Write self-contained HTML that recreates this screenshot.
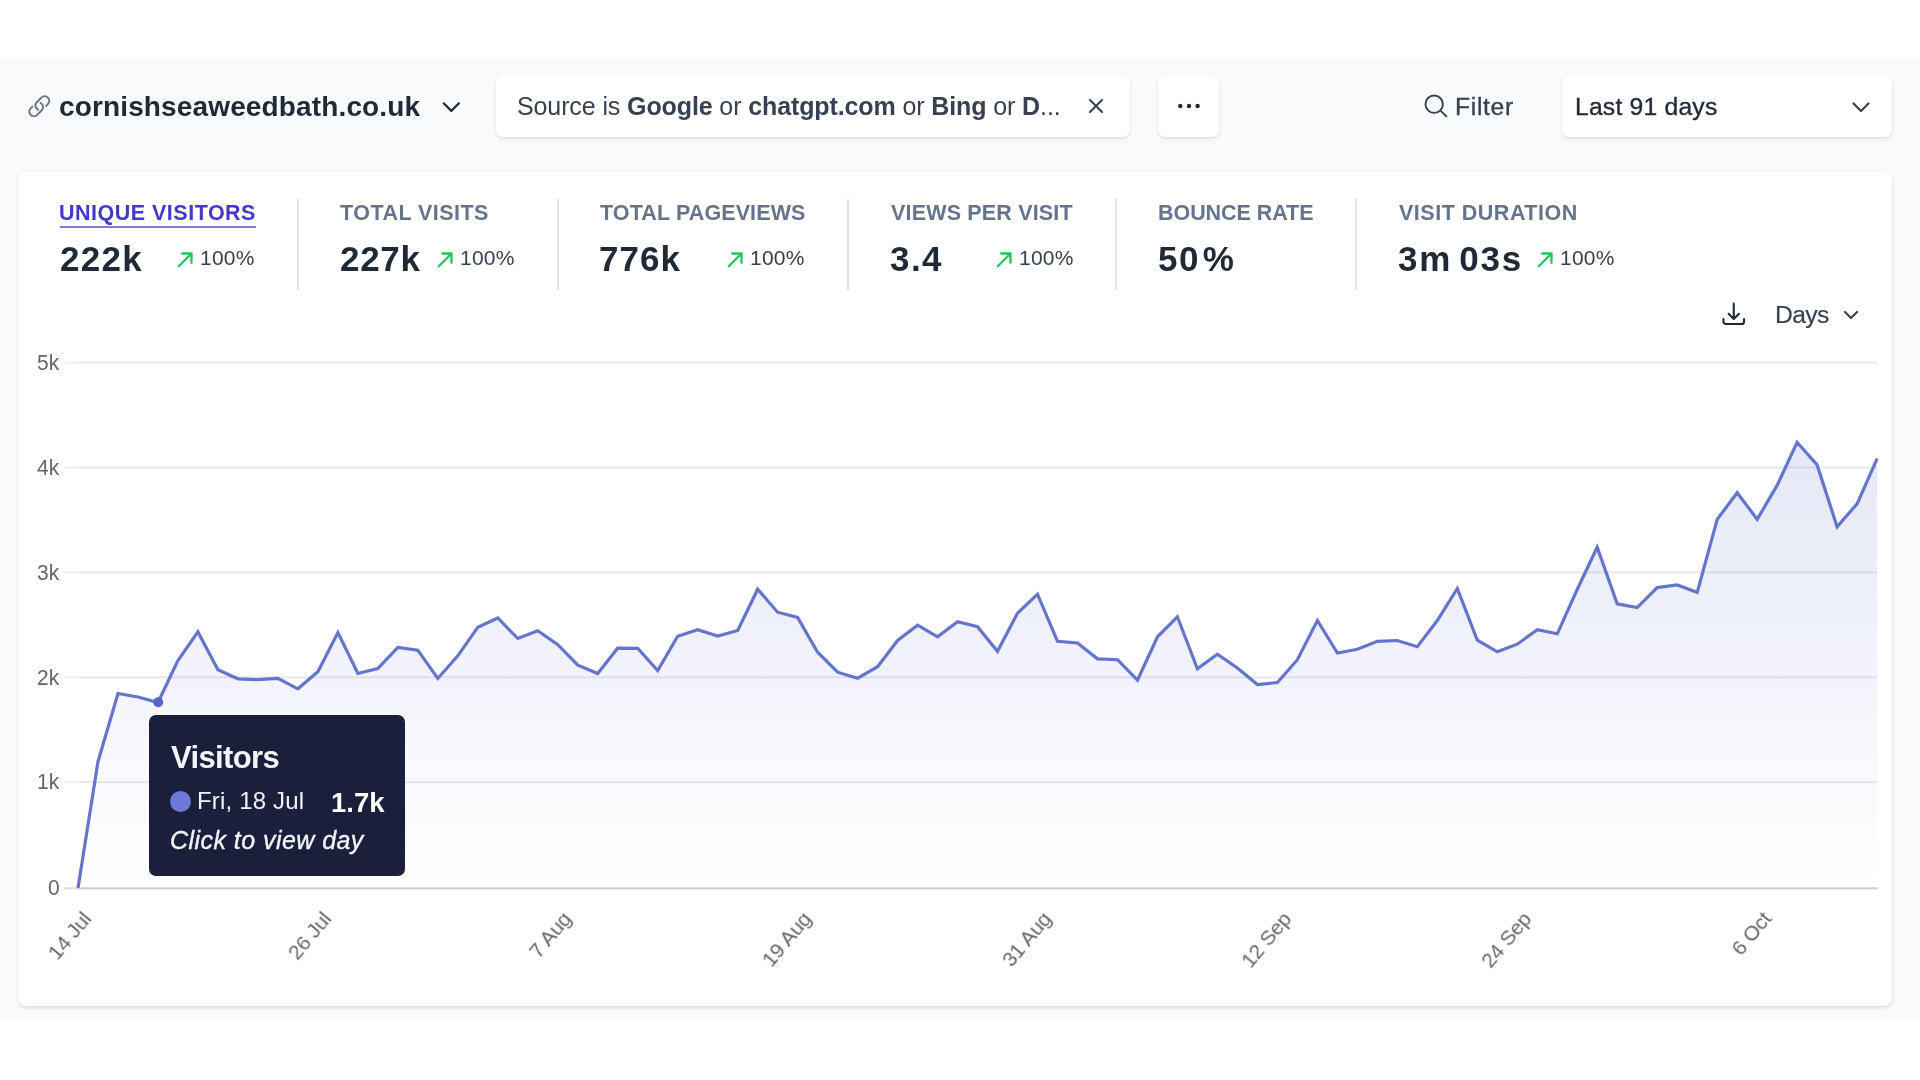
<!DOCTYPE html>
<html><head><meta charset="utf-8"><title>Plausible</title>
<style>
*{box-sizing:border-box;margin:0;padding:0}
html,body{width:1920px;height:1080px;overflow:hidden;background:#fff}
body{font-family:"Liberation Sans",sans-serif;color:#1f2937;position:relative}
.bg{position:absolute;left:0;top:59px;width:1920px;height:960px;background:#f9fafb}
.abs{position:absolute;white-space:nowrap}
.t{line-height:1.2;will-change:transform}
.pill{position:absolute;background:#fff;border-radius:7px;box-shadow:0 2px 5px rgba(0,0,0,.08),0 1px 2px rgba(0,0,0,.06)}
.card{position:absolute;left:18.300px;top:171.500px;width:1873.900px;height:834.100px;background:#fff;border-radius:8px;box-shadow:0 2px 5px rgba(0,0,0,.09),0 1px 2px rgba(0,0,0,.07)}
.div{position:absolute;top:198.500px;width:2px;height:91.500px;background:#e1e2e6}
.xl{position:absolute;width:200px;text-align:right;line-height:24px;color:#666;transform-origin:100% 50%;transform:rotate(-50deg);white-space:nowrap;will-change:transform}
</style></head><body>
<div class="bg"></div>

<!-- header icons -->
<svg class="abs" style="left:26.750px;top:93.850px" width="24.500" height="24.500" viewBox="0 0 24 24" fill="none" stroke="#6b7280" stroke-width="1.9" stroke-linecap="round" stroke-linejoin="round"><path d="M13.19 8.688a4.5 4.5 0 011.242 7.244l-4.5 4.5a4.5 4.5 0 01-6.364-6.364l1.757-1.757m13.35-.622l1.757-1.757a4.5 4.5 0 00-6.364-6.364l-4.5 4.5a4.5 4.5 0 001.242 7.244"/></svg>
<svg class="abs" style="left:441px;top:97px" width="20" height="20" viewBox="0 0 20 20" fill="none" stroke="#1f2937" stroke-width="2.2" stroke-linecap="round" stroke-linejoin="round"><path d="M2.700 6.300l7.600 7.600 7.600-7.600"/></svg>

<div class="pill" style="left:496px;top:75px;width:634px;height:62px"></div>
<svg class="abs" style="left:1085.5px;top:96px" width="20" height="20" viewBox="0 0 20 20" fill="none" stroke="#374151" stroke-width="2" stroke-linecap="round"><path d="M4 4l12 12M16 4L4 16"/></svg>

<div class="pill" style="left:1157.800px;top:75px;width:61.400px;height:61.700px"></div>
<svg class="abs" style="left:1176.500px;top:101.700px" width="24" height="8" viewBox="0 0 24 8" fill="#1f2937"><circle cx="3.300" cy="4" r="2.200"/><circle cx="12" cy="4" r="2.200"/><circle cx="20.600" cy="4" r="2.200"/></svg>

<svg class="abs" style="left:1421.600px;top:91.800px" width="27.800" height="27.800" viewBox="0 0 24 24" fill="none" stroke="#374151" stroke-width="1.650" stroke-linecap="round" stroke-linejoin="round"><path d="M21 21l-5.197-5.197m0 0A7.5 7.5 0 105.196 5.196a7.5 7.5 0 0010.607 10.607z"/></svg>

<div class="pill" style="left:1562px;top:75px;width:330px;height:62px"></div>
<svg class="abs" style="left:1851.400px;top:97px" width="20" height="20" viewBox="0 0 20 20" fill="none" stroke="#374151" stroke-width="2.2" stroke-linecap="round" stroke-linejoin="round"><path d="M2.500 6.500l7.500 7.500 7.500-7.500"/></svg>

<!-- card -->
<div class="card"></div>
<div class="abs" style="left:60px;top:226px;width:196px;height:2px;background:#857bd8"></div>
<div class="div" style="left:297px"></div>
<div class="div" style="left:557px"></div>
<div class="div" style="left:847px"></div>
<div class="div" style="left:1115px"></div>
<div class="div" style="left:1355px"></div>
<svg class="abs" style="left:176.0px;top:250.5px" width="18" height="18" viewBox="0 0 18 18" fill="none" stroke="#22c55e" stroke-width="2.3" stroke-linecap="round" stroke-linejoin="round"><path d="M2.800 15.200L15.500 2.500M6.200 2.500H15.500V11.800"/></svg>
<svg class="abs" style="left:435.5px;top:250.5px" width="18" height="18" viewBox="0 0 18 18" fill="none" stroke="#22c55e" stroke-width="2.3" stroke-linecap="round" stroke-linejoin="round"><path d="M2.800 15.200L15.500 2.500M6.200 2.500H15.500V11.800"/></svg>
<svg class="abs" style="left:726.1px;top:250.5px" width="18" height="18" viewBox="0 0 18 18" fill="none" stroke="#22c55e" stroke-width="2.3" stroke-linecap="round" stroke-linejoin="round"><path d="M2.800 15.200L15.500 2.500M6.200 2.500H15.500V11.800"/></svg>
<svg class="abs" style="left:994.8px;top:250.5px" width="18" height="18" viewBox="0 0 18 18" fill="none" stroke="#22c55e" stroke-width="2.3" stroke-linecap="round" stroke-linejoin="round"><path d="M2.800 15.200L15.500 2.500M6.200 2.500H15.500V11.800"/></svg>
<svg class="abs" style="left:1535.5px;top:250.5px" width="18" height="18" viewBox="0 0 18 18" fill="none" stroke="#22c55e" stroke-width="2.3" stroke-linecap="round" stroke-linejoin="round"><path d="M2.800 15.200L15.500 2.500M6.200 2.500H15.500V11.800"/></svg>


<!-- days -->
<svg class="abs" style="left:1720px;top:299.500px" width="27.500" height="27.500" viewBox="0 0 24 24" fill="none" stroke="#1f2937" stroke-width="1.8" stroke-linecap="round" stroke-linejoin="round"><path d="M3 16.5v2.250A2.250 2.250 0 005.250 21h13.500A2.250 2.250 0 0021 18.750V16.500M16.500 12L12 16.500m0 0L7.500 12m4.500 4.500V3"/></svg>
<svg class="abs" style="left:1842.200px;top:305.500px" width="18" height="18" viewBox="0 0 18 18" fill="none" stroke="#374151" stroke-width="2.2" stroke-linecap="round" stroke-linejoin="round"><path d="M3 6l6 6 6-6"/></svg>

<!-- chart -->
<svg class="abs" style="left:0;top:0" width="1920" height="1080" viewBox="0 0 1920 1080">
<defs><linearGradient id="g" x1="0" y1="362" x2="0" y2="887" gradientUnits="userSpaceOnUse">
<stop offset="0" stop-color="#6574cd" stop-opacity="0.20"/><stop offset="1" stop-color="#6574cd" stop-opacity="0"/></linearGradient></defs>
<rect x="64" y="361.6" width="14" height="2" fill="#f0f0f1"/><rect x="78" y="361.6" width="1799" height="2" fill="#e8e8ea"/>
<rect x="64" y="466.5" width="14" height="2" fill="#f0f0f1"/><rect x="78" y="466.5" width="1799" height="2" fill="#e8e8ea"/>
<rect x="64" y="571.4" width="14" height="2" fill="#f0f0f1"/><rect x="78" y="571.4" width="1799" height="2" fill="#e8e8ea"/>
<rect x="64" y="676.3" width="14" height="2" fill="#f0f0f1"/><rect x="78" y="676.3" width="1799" height="2" fill="#e8e8ea"/>
<rect x="64" y="781.2" width="14" height="2" fill="#f0f0f1"/><rect x="78" y="781.2" width="1799" height="2" fill="#e8e8ea"/>
<rect x="64" y="887.3" width="14" height="2" fill="#dededf"/><rect x="78" y="887.3" width="1800" height="2" fill="#cdcdcf"/>

<path d="M78.0 888.0 L98.0 761.5 L118.0 693.5 L138.0 697.0 L158.0 702.5 L177.9 660.5 L197.9 631.8 L217.9 669.7 L237.9 678.8 L257.9 679.7 L277.9 678.3 L297.9 688.8 L317.9 671.8 L337.9 632.5 L357.9 673.5 L377.8 668.5 L397.8 647.5 L417.8 650.2 L437.8 678.5 L457.8 655.8 L477.8 627.2 L497.8 618.0 L517.8 638.5 L537.8 630.8 L557.8 644.7 L577.8 665.2 L597.7 673.5 L617.7 648.2 L637.7 648.3 L657.7 670.5 L677.7 636.3 L697.7 629.7 L717.7 636.0 L737.7 630.5 L757.7 589.2 L777.6 612.2 L797.6 617.5 L817.6 652.2 L837.6 672.2 L857.6 678.2 L877.6 666.7 L897.6 640.5 L917.6 625.2 L937.6 636.8 L957.6 621.8 L977.5 626.7 L997.5 651.3 L1017.5 613.3 L1037.5 594.2 L1057.5 641.3 L1077.5 643.0 L1097.5 658.8 L1117.5 659.7 L1137.5 680.2 L1157.5 636.8 L1177.4 616.8 L1197.4 668.8 L1217.4 654.2 L1237.4 668.0 L1257.4 684.5 L1277.4 682.5 L1297.4 659.7 L1317.4 620.5 L1337.4 653.0 L1357.4 649.2 L1377.3 641.3 L1397.3 640.5 L1417.3 646.7 L1437.3 620.5 L1457.3 588.5 L1477.3 640.2 L1497.3 651.8 L1517.3 644.2 L1537.3 629.7 L1557.3 633.8 L1577.2 589.5 L1597.2 547.2 L1617.2 603.8 L1637.2 607.6 L1657.2 587.6 L1677.2 584.9 L1697.2 592.3 L1717.2 519.4 L1737.2 492.7 L1757.2 519.4 L1777.1 485.4 L1797.1 442.3 L1817.1 464.9 L1837.1 526.7 L1857.1 503.8 L1877.1 458.7 L1877.1 888.3 L78.0 888.3 Z" fill="url(#g)"/>
<path d="M78.0 888.0 L98.0 761.5 L118.0 693.5 L138.0 697.0 L158.0 702.5 L177.9 660.5 L197.9 631.8 L217.9 669.7 L237.9 678.8 L257.9 679.7 L277.9 678.3 L297.9 688.8 L317.9 671.8 L337.9 632.5 L357.9 673.5 L377.8 668.5 L397.8 647.5 L417.8 650.2 L437.8 678.5 L457.8 655.8 L477.8 627.2 L497.8 618.0 L517.8 638.5 L537.8 630.8 L557.8 644.7 L577.8 665.2 L597.7 673.5 L617.7 648.2 L637.7 648.3 L657.7 670.5 L677.7 636.3 L697.7 629.7 L717.7 636.0 L737.7 630.5 L757.7 589.2 L777.6 612.2 L797.6 617.5 L817.6 652.2 L837.6 672.2 L857.6 678.2 L877.6 666.7 L897.6 640.5 L917.6 625.2 L937.6 636.8 L957.6 621.8 L977.5 626.7 L997.5 651.3 L1017.5 613.3 L1037.5 594.2 L1057.5 641.3 L1077.5 643.0 L1097.5 658.8 L1117.5 659.7 L1137.5 680.2 L1157.5 636.8 L1177.4 616.8 L1197.4 668.8 L1217.4 654.2 L1237.4 668.0 L1257.4 684.5 L1277.4 682.5 L1297.4 659.7 L1317.4 620.5 L1337.4 653.0 L1357.4 649.2 L1377.3 641.3 L1397.3 640.5 L1417.3 646.7 L1437.3 620.5 L1457.3 588.5 L1477.3 640.2 L1497.3 651.8 L1517.3 644.2 L1537.3 629.7 L1557.3 633.8 L1577.2 589.5 L1597.2 547.2 L1617.2 603.8 L1637.2 607.6 L1657.2 587.6 L1677.2 584.9 L1697.2 592.3 L1717.2 519.4 L1737.2 492.7 L1757.2 519.4 L1777.1 485.4 L1797.1 442.3 L1817.1 464.9 L1837.1 526.7 L1857.1 503.8 L1877.1 458.7" fill="none" stroke="#6574cd" stroke-width="3.2" stroke-linejoin="miter" stroke-linecap="butt"/>
<circle cx="158.2" cy="702.2" r="5" fill="#5663c9"/>
</svg>
<div class="xl" style="left:-112.6px;top:902.9px;font-size:21px;letter-spacing:-0.3px">14 Jul</div>
<div class="xl" style="left:127.4px;top:902.9px;font-size:21px;letter-spacing:-0.3px">26 Jul</div>
<div class="xl" style="left:367.4px;top:902.9px;font-size:21px;letter-spacing:-0.3px">7 Aug</div>
<div class="xl" style="left:607.4px;top:902.9px;font-size:21px;letter-spacing:-0.3px">19 Aug</div>
<div class="xl" style="left:847.4px;top:902.9px;font-size:21px;letter-spacing:-0.3px">31 Aug</div>
<div class="xl" style="left:1087.4px;top:902.9px;font-size:21px;letter-spacing:-0.3px">12 Sep</div>
<div class="xl" style="left:1327.4px;top:902.9px;font-size:21px;letter-spacing:-0.3px">24 Sep</div>
<div class="xl" style="left:1567.4px;top:902.9px;font-size:21px;letter-spacing:-0.3px">6 Oct</div>


<!-- tooltip -->
<div class="abs" style="left:149px;top:715.200px;width:256px;height:160.800px;background:#1a1f3b;border-radius:7px"></div>
<div class="abs" style="left:170px;top:791.200px;width:21px;height:21px;border-radius:50%;background:#6b7ad9"></div>
<div class="abs t" id="domain" style="left:59.00px;top:89.50px;font-size:28px;letter-spacing:0.139px;font-weight:bold;color:#1f2937">cornishseaweedbath.co.uk</div>
<div class="abs t" id="filt" style="left:517.00px;top:91.31px;font-size:25px;letter-spacing:-0.110px;color:#374151">Source is <b>Google</b> or <b>chatgpt.com</b> or <b>Bing</b> or <b>D</b>...</div>
<div class="abs t" id="filter" style="left:1455.00px;top:91.71px;font-size:24.7px;letter-spacing:0.660px;color:#374151;-webkit-text-stroke:0.35px #374151">Filter</div>
<div class="abs t" id="last" style="left:1575.00px;top:91.71px;font-size:24.7px;letter-spacing:0.204px;color:#1f2937;-webkit-text-stroke:0.35px #1f2937">Last 91 days</div>
<div class="abs t" id="l1" style="left:59.00px;top:200.50px;font-size:21.5px;letter-spacing:0.493px;font-weight:bold;color:#4338ca">UNIQUE VISITORS</div>
<div class="abs t" id="l2" style="left:340.00px;top:200.50px;font-size:21.5px;letter-spacing:0.464px;font-weight:bold;color:#64748b">TOTAL VISITS</div>
<div class="abs t" id="l3" style="left:600.00px;top:200.50px;font-size:21.5px;letter-spacing:0.107px;font-weight:bold;color:#64748b">TOTAL PAGEVIEWS</div>
<div class="abs t" id="l4" style="left:891.00px;top:200.50px;font-size:21.5px;letter-spacing:0.172px;font-weight:bold;color:#64748b">VIEWS PER VISIT</div>
<div class="abs t" id="l5" style="left:1158.00px;top:200.50px;font-size:21.5px;letter-spacing:-0.060px;font-weight:bold;color:#64748b">BOUNCE RATE</div>
<div class="abs t" id="l6" style="left:1399.00px;top:200.50px;font-size:21.5px;letter-spacing:0.508px;font-weight:bold;color:#64748b">VISIT DURATION</div>
<div class="abs t" id="v1" style="left:60.00px;top:238.21px;font-size:35px;letter-spacing:1.300px;font-weight:bold;color:#1f2937">222k</div>
<div class="abs t" id="v2" style="left:340.00px;top:238.21px;font-size:35px;letter-spacing:0.700px;font-weight:bold;color:#1f2937">227k</div>
<div class="abs t" id="v3" style="left:599.00px;top:238.21px;font-size:35px;letter-spacing:1.000px;font-weight:bold;color:#1f2937">776k</div>
<div class="abs t" id="v4" style="left:890.00px;top:238.21px;font-size:35px;letter-spacing:1.450px;font-weight:bold;color:#1f2937">3.4</div>
<div class="abs t" id="v5" style="left:1158.00px;top:238.21px;font-size:35px;letter-spacing:0.000px;font-weight:bold;color:#1f2937"><span style="letter-spacing:1.6px">5</span><span style="letter-spacing:4.3px">0</span>%</div>
<div class="abs t" id="v6" style="left:1398.00px;top:238.21px;font-size:35px;letter-spacing:1.720px;font-weight:bold;color:#1f2937">3m<span style="font-size:20px"> </span>03s</div>
<div class="abs t" id="p1" style="left:200.00px;top:245.01px;font-size:21px;letter-spacing:0.200px;color:#374151">100%</div>
<div class="abs t" id="p2" style="left:460.00px;top:245.01px;font-size:21px;letter-spacing:0.200px;color:#374151">100%</div>
<div class="abs t" id="p3" style="left:750.00px;top:245.01px;font-size:21px;letter-spacing:0.200px;color:#374151">100%</div>
<div class="abs t" id="p4" style="left:1019.00px;top:245.01px;font-size:21px;letter-spacing:0.200px;color:#374151">100%</div>
<div class="abs t" id="p6" style="left:1560.00px;top:245.01px;font-size:21px;letter-spacing:0.200px;color:#374151">100%</div>
<div class="abs t" id="days" style="left:1775.00px;top:299.51px;font-size:24.7px;letter-spacing:-0.600px;color:#374151;-webkit-text-stroke:0.15px #374151">Days</div>
<div class="abs t" id="tt1" style="left:171.00px;top:738.71px;font-size:31px;letter-spacing:-0.643px;font-weight:bold;color:#f3f4f6">Visitors</div>
<div class="abs t" id="tt2" style="left:197.00px;top:787.01px;font-size:24px;letter-spacing:0.180px;color:#f3f4f6">Fri, 18 Jul</div>
<div class="abs t" id="tt3" style="left:331.00px;top:785.71px;font-size:27.5px;letter-spacing:0.000px;color:#fff;font-weight:bold">1.7k</div>
<div class="abs t" id="tt4" style="left:170.00px;top:824.61px;font-size:25px;letter-spacing:0.450px;color:#f3f4f6;font-style:italic;-webkit-text-stroke:0.35px #f3f4f6">Click to view day</div>
<div class="abs t" id="y5k" style="left:37.00px;top:349.82px;font-size:21px;letter-spacing:0.000px;color:#666;transform:scaleY(1.04);transform-origin:50% 80%">5k</div>
<div class="abs t" id="y4k" style="left:37.00px;top:454.72px;font-size:21px;letter-spacing:0.000px;color:#666;transform:scaleY(1.04);transform-origin:50% 80%">4k</div>
<div class="abs t" id="y3k" style="left:37.00px;top:559.62px;font-size:21px;letter-spacing:0.000px;color:#666;transform:scaleY(1.04);transform-origin:50% 80%">3k</div>
<div class="abs t" id="y2k" style="left:37.00px;top:664.52px;font-size:21px;letter-spacing:0.000px;color:#666;transform:scaleY(1.04);transform-origin:50% 80%">2k</div>
<div class="abs t" id="y1k" style="left:37.00px;top:769.42px;font-size:21px;letter-spacing:0.000px;color:#666;transform:scaleY(1.04);transform-origin:50% 80%">1k</div>
<div class="abs t" id="y0" style="left:48.00px;top:874.82px;font-size:21px;letter-spacing:0.000px;color:#666;transform:scaleY(1.04);transform-origin:50% 80%">0</div>

</body></html>
